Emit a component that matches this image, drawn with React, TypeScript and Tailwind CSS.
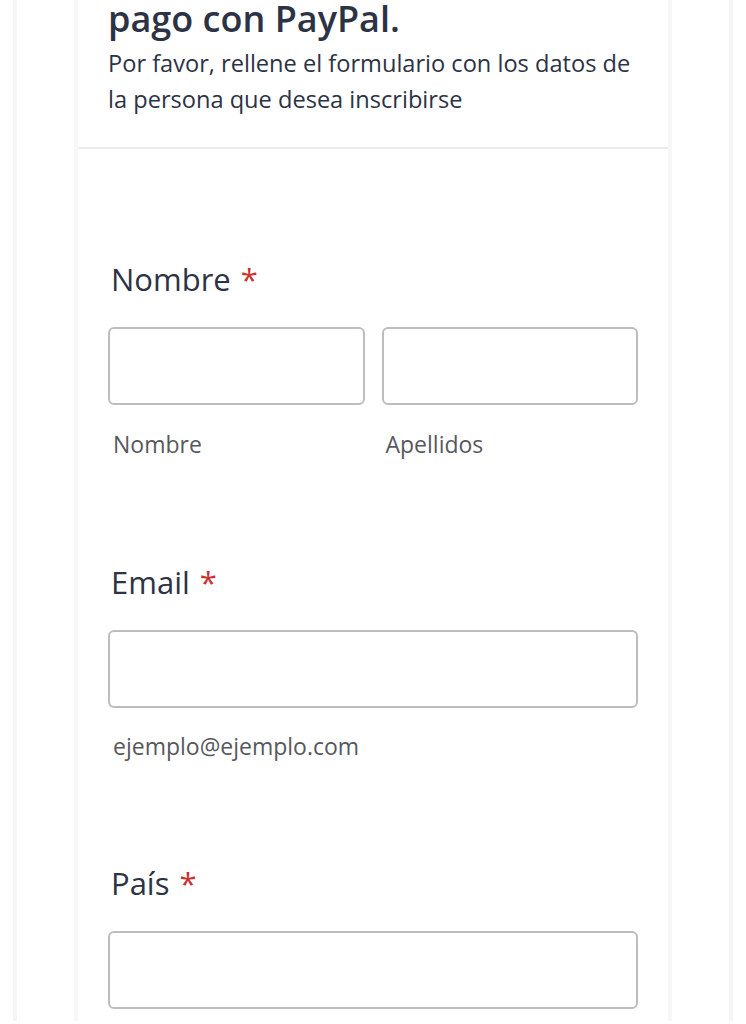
import React from "react";

function Label({ text }: { text: string }) {
  return (
    <div className="pl-[3px] text-[31px] leading-[36px] text-[#2c3345]">
      {text}
      <span className="ml-[10px] text-[#c8312f]">*</span>
    </div>
  );
}

function Input() {
  return <div className="h-[78px] w-full rounded-[6px] border-2 border-[#bdbdbd] bg-white" />;
}

export default function App() {
  return (
    <div
      className="min-h-[1024px] w-[746px] overflow-hidden bg-white"
      style={{ fontFamily: '"Open Sans", "Noto Sans", sans-serif' }}
    >
      <div className="ml-[13px] min-h-[1024px] w-[720px] border-x-4 border-[#f5f5f5] px-[57px]">
        <div className="min-h-[1024px] w-[598px] border-x-4 border-[#f7f7f7] bg-white">
          <div className="px-[30px] pb-[30px]">
            <h1 className="-mt-[3px] text-[36px] font-semibold leading-[44px] text-[#2c3345]">
              pago con PayPal.
            </h1>
            <p className="mt-[4px] text-[23.6px] leading-[36px] text-[#2c3345]">
              Por favor, rellene el formulario con los datos de la persona que desea inscribirse
            </p>
          </div>
          <div className="h-[2px] bg-[#ececec]" />
          <div className="px-[30px] pt-[112px]">
            <Label text="Nombre" />
            <div className="mt-[30px] grid grid-cols-2 gap-[17px]">
              <div>
                <Input />
                <div className="mt-[24px] pl-[5px] text-[23px] leading-[30px] text-[#57585c]">Nombre</div>
              </div>
              <div>
                <Input />
                <div className="mt-[24px] pl-[4px] text-[23px] leading-[30px] text-[#57585c]">Apellidos</div>
              </div>
            </div>

            <div className="mt-[105px]">
              <Label text="Email" />
              <div className="mt-[30px]">
                <Input />
              </div>
              <div className="mt-[23px] pl-[5px] text-[23px] leading-[30px] text-[#57585c]">
                ejemplo@ejemplo.com
              </div>
            </div>

            <div className="mt-[104px]">
              <Label text="País" />
              <div className="mt-[30px]">
                <Input />
              </div>
            </div>
          </div>
        </div>
      </div>
    </div>
  );
}
